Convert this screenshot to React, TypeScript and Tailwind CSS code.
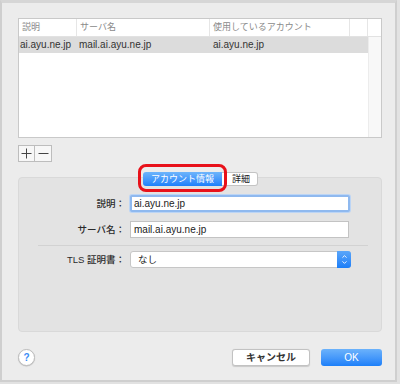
import { ChevronUp, ChevronDown } from "lucide-react";

const font = "font-['Liberation_Sans','Noto_Sans_CJK_JP',sans-serif]";

function FieldRow({ label, children }: { label: string; children: React.ReactNode }) {
    return (
        <div className="flex items-center">
            <div className="w-[111px] pr-[5px] text-right text-[9.5px] font-medium text-[#2a2a2a] leading-none whitespace-nowrap">{label}</div>
            {children}
        </div>
    );
}

function App() {
    return (
        <div className={`w-[400px] h-[384px] bg-[#e2e2e2] ${font}`}>
            <div className="w-[397px] h-[382px] bg-[#ececec] border-t-[3px] border-t-[#d6d6d6] border-x-2 border-b-2 border-x-[#cfcfcf] border-b-[#cfcfcf] flex flex-col">
                {/* account table */}
                <div className="ml-[16px] mt-[15px] w-[364px] h-[120px] bg-white border border-[#c9c9c9] flex flex-col">
                    <div className="flex h-[18px] border-b border-[#e2e2e2] text-[9px] text-[#8a8a8a] leading-none">
                        <div className="w-[58px] border-r border-[#e6e6e6] flex items-center pl-[3px]">説明</div>
                        <div className="w-[133px] border-r border-[#e6e6e6] flex items-center pl-[3px]">サーバ名</div>
                        <div className="w-[140px] border-r border-[#e6e6e6] flex items-center pl-[3px]">使用しているアカウント</div>
                        <div className="w-[18px] border-r border-[#e6e6e6]"></div>
                        <div className="flex-1"></div>
                    </div>
                    <div className="flex flex-1">
                        <div className="w-[349px]">
                            <div className="flex h-[16px] bg-[#dcdcdc] text-[10px] text-[#333] leading-none items-center">
                                <div className="w-[58px] pl-[1px] whitespace-nowrap">ai.ayu.ne.jp</div>
                                <div className="w-[133px] pl-[2px] whitespace-nowrap">mail.ai.ayu.ne.jp</div>
                                <div className="w-[140px] pl-[3px] whitespace-nowrap">ai.ayu.ne.jp</div>
                            </div>
                        </div>
                        <div className="flex-1 bg-[#f8f8f8] border-l border-[#ececec]"></div>
                    </div>
                </div>

                {/* + / - */}
                <div className="ml-[16px] mt-[7px] flex">
                    <button className="w-[17px] h-[17px] bg-[#f7f7f7] border border-[#bdbdbd] flex items-center justify-center">
                        <svg width="11" height="11" viewBox="0 0 11 11"><path d="M5.5 0.5v10M0.5 5.5h10" stroke="#444" strokeWidth="1" /></svg>
                    </button>
                    <button className="w-[17px] h-[17px] bg-[#f7f7f7] border border-l-0 border-[#bdbdbd] flex items-center justify-center">
                        <svg width="11" height="11" viewBox="0 0 11 11"><path d="M0.5 5.5h10" stroke="#444" strokeWidth="1" /></svg>
                    </button>
                </div>

                {/* tabs */}
                <div className="relative z-10 mt-[10px] ml-[141px] flex h-[14px]">
                    <div className="relative">
                        <div className="w-[79px] h-[14px] rounded-l-[3px] bg-gradient-to-b from-[#6db4fb] to-[#1a80fa] text-white text-[9px] leading-none flex items-center justify-center">アカウント情報</div>
                        <div className="absolute -left-[5px] -right-[5px] -top-[8px] -bottom-[6px] border-[3px] border-[#e8111a] rounded-[8px]"></div>
                    </div>
                    <div className="w-[36px] h-[14px] rounded-r-[3px] bg-white border border-l-0 border-[#c4c4c4] text-[9px] text-[#222] leading-none flex items-center justify-center pl-[3px]">詳細</div>
                </div>

                {/* panel */}
                <div className="ml-[16px] -mt-[9px] w-[364px] h-[155px] bg-[#e3e3e3] border border-[#d9d9d9] rounded-[4px] pt-[17px] flex flex-col">
                    <FieldRow label="説明：">
                        <div className="w-[220px] h-[17px] bg-white border-2 border-[#8fb9ef] ring-1 ring-[#bcd5f5] rounded-[2px] text-[10px] text-[#222] leading-none flex items-center pl-[2px]">ai.ayu.ne.jp</div>
                    </FieldRow>
                    <div className="mt-[9px]">
                        <FieldRow label="サーバ名：">
                            <div className="w-[219px] h-[17px] bg-white border border-[#c3c3c3] text-[10px] text-[#222] leading-none flex items-center pl-[3px]">mail.ai.ayu.ne.jp</div>
                        </FieldRow>
                    </div>
                    <div className="mt-[7px] ml-[19px] w-[330px] h-px bg-[#d2d2d2]"></div>
                    <div className="mt-[5px]">
                        <FieldRow label="TLS 証明書：">
                            <div className="w-[221px] h-[17px] bg-white border border-[#c6c6c6] rounded-[3px] flex items-center">
                                <div className="flex-1 pl-[7px] text-[9.5px] text-[#222] leading-none">なし</div>
                                <div className="w-[14px] h-[17px] -my-px -mr-px bg-gradient-to-b from-[#5aa6fa] to-[#1a7ef8] rounded-r-[3px] flex flex-col items-center justify-center">
                                    <ChevronUp size={7} color="white" strokeWidth={3} className="-mb-[1px]" />
                                    <ChevronDown size={7} color="white" strokeWidth={3} />
                                </div>
                            </div>
                        </FieldRow>
                    </div>
                </div>

                {/* bottom buttons */}
                <div className="mt-[17px] ml-[16px] flex items-center">
                    <div className="w-[17px] h-[17px] rounded-full bg-white border border-[#bdbdbd] shadow-[0_0.5px_1px_rgba(0,0,0,0.2)] flex items-center justify-center text-[10px] font-bold text-[#3b8cf5] leading-none">?</div>
                    <button className="ml-[197px] w-[78px] h-[17px] bg-white border border-[#c2c2c2] rounded-[3px] shadow-[0_0.5px_1px_rgba(0,0,0,0.15)] text-[10px] font-bold text-[#333] leading-none flex items-center justify-center">キャンセル</button>
                    <button className="ml-[11px] w-[61px] h-[17px] rounded-[3px] bg-gradient-to-b from-[#6bb2fb] to-[#1b7ff9] text-white text-[10px] leading-none flex items-center justify-center">OK</button>
                </div>
            </div>
        </div>
    );
}

export default App;
